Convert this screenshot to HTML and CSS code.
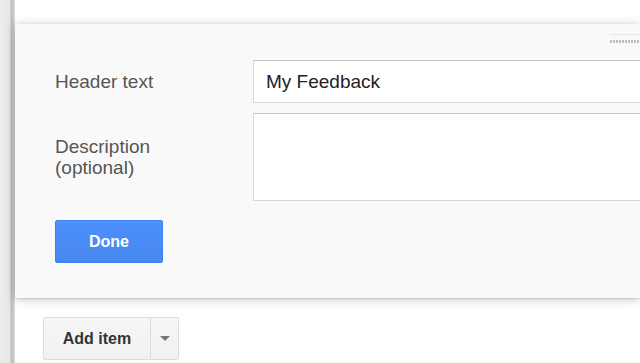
FILE: index.html
```html
<!DOCTYPE html>
<html lang="en">
<head>
    <meta charset="UTF-8">
    <meta name="viewport" content="width=device-width, initial-scale=1.0">
    <title>Form header</title>
    <link rel="stylesheet" href="styles.css">
</head>
<body>
    <div class="page">
        <div class="rail"></div>

        <main class="content">
            <section class="card">
                <div class="drag-handle">
                    <svg width="30" height="12" viewBox="0 0 30 12">
                        <defs>
                            <pattern id="dots" width="3" height="6" patternUnits="userSpaceOnUse">
                                <rect x="0" y="0" width="2" height="3" fill="#bdbdbd"/>
                            </pattern>
                        </defs>
                        <rect x="0" y="0" width="30" height="1" fill="#e6e6e6"/>
                        <rect x="0" y="3" width="30" height="9" fill="url(#dots)"/>
                    </svg>
                </div>

                <div class="field-row">
                    <label class="field-label" for="header-text">Header text</label>
                    <input class="field-input" id="header-text" type="text" value="My Feedback">
                </div>

                <div class="field-row">
                    <label class="field-label" for="description">Description<br>(optional)</label>
                    <textarea class="field-input field-area" id="description"></textarea>
                </div>

                <button class="btn-done">Done</button>
            </section>

            <div class="add-item">
                <button class="add-item-main">Add item</button>
                <button class="add-item-menu"><span class="caret"></span></button>
            </div>
        </main>
    </div>
</body>
</html>
```

FILE: styles.css
```css
/* Base */
* {
    margin: 0;
    padding: 0;
    box-sizing: border-box;
}

body {
    background: #fff;
    font-family: 'Liberation Sans', Arial, sans-serif;
    color: #444;
    overflow: hidden;
}

.page {
    display: flex;
    min-height: 363px;
}

/* Left rail */
.rail {
    width: 15px;
    flex-shrink: 0;
    background: linear-gradient(90deg, #ededed 0, #e6e6e6 10px, #bcbcbc 11px, #c6c6c6 13px, #dedede 15px);
}

.content {
    flex: 1;
    padding-top: 24px;
}

/* Header card (runs off the right edge) */
.card {
    position: relative;
    background: #f9f9f9;
    padding: 36px 0 35px 40px;
    box-shadow: 0 1px 10px rgba(0, 0, 0, 0.22), 0 1px 2px rgba(0, 0, 0, 0.12);
}

.drag-handle {
    position: absolute;
    top: 10px;
    right: 0;
    line-height: 0;
}

.field-row {
    display: flex;
    align-items: center;
    margin-bottom: 10px;
}

.field-label {
    width: 198px;
    flex-shrink: 0;
    font-size: 19px;
    line-height: 21px;
    color: #555;
}

.field-input {
    flex: 1;
    min-width: 0;
    height: 43px;
    padding: 0 12px;
    border: 1px solid #d9d9d9;
    border-top-color: #c4c4c4;
    border-right: none;
    background: #fff;
    font-family: inherit;
    font-size: 19px;
    color: #222;
    outline: none;
}

.field-area {
    height: 88px;
    resize: none;
}

.btn-done {
    margin-top: 9px;
    width: 108px;
    height: 43px;
    border: 1px solid #3d82f0;
    border-radius: 2px;
    background: linear-gradient(#4d90fe, #4787ed);
    color: #fff;
    font-family: inherit;
    font-size: 16px;
    font-weight: 700;
}

/* Add item split button */
.add-item {
    display: flex;
    margin: 19px 0 0 28px;
}

.add-item button {
    height: 43px;
    border: 1px solid #dcdcdc;
    background: linear-gradient(#f6f6f6, #f1f1f1);
    font-family: inherit;
    color: #333;
}

.add-item-main {
    width: 108px;
    border-radius: 2px 0 0 2px;
    font-size: 16px;
    font-weight: 700;
}

.add-item-menu {
    width: 28px;
    border-left: none !important;
    border-radius: 0 2px 2px 0;
    display: flex;
    align-items: center;
    justify-content: center;
}

.caret {
    width: 0;
    height: 0;
    border-left: 5px solid transparent;
    border-right: 5px solid transparent;
    border-top: 5px solid #777;
}
```
